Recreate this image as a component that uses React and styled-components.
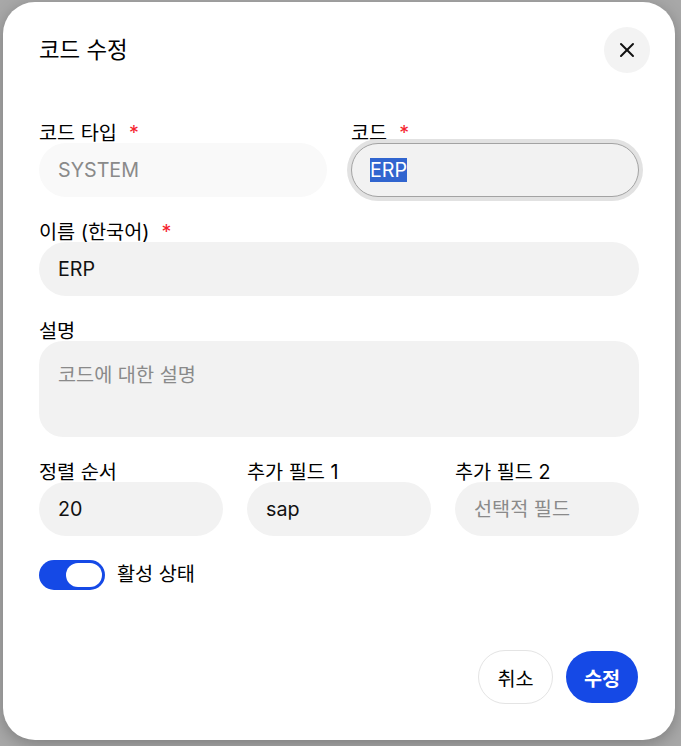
import React, { useEffect, useRef } from 'react';
import styled, { createGlobalStyle } from 'styled-components';

const GlobalStyle = createGlobalStyle`
  html, body {
    margin: 0;
    padding: 0;
    height: 100%;
    background: #a8a8a8;
  }
  * {
    box-sizing: border-box;
  }
`;

const FONT = `Inter, "Noto Sans CJK KR", sans-serif`;

const Backdrop = styled.div`
  width: 681px;
  height: 746px;
  padding: 2px 6px 6px 3px;
  overflow: hidden;
  font-family: ${FONT};
  color: #000;
`;

const Modal = styled.form`
  display: flex;
  flex-direction: column;
  width: 672px;
  height: 738px;
  padding: 25px 36px 36px;
  background: #fff;
  border-radius: 32px;
  box-shadow: 0 4px 16px rgba(0, 0, 0, 0.25);
`;

const Header = styled.header`
  display: flex;
  justify-content: space-between;
  align-items: center;
  height: 46px;
  margin-bottom: 50px;
  margin-right: -11px;
`;

const Title = styled.h2`
  margin: 0;
  font-size: 22.4px;
  font-weight: 400;
  line-height: 46px;
`;

const CloseButton = styled.button`
  display: flex;
  align-items: center;
  justify-content: center;
  width: 46px;
  height: 46px;
  padding: 0;
  border: none;
  border-radius: 50%;
  background: #f3f3f3;
  color: #111;
`;

const Fields = styled.div`
  display: flex;
  flex-direction: column;
  gap: 25px;
`;

const Row = styled.div`
  display: grid;
  grid-template-columns: repeat(${props => props.$cols || 1}, 1fr);
  gap: 24px;
`;

const Field = styled.div`
  display: flex;
  flex-direction: column;
  min-width: 0;
`;

const Label = styled.label`
  display: block;
  height: 20px;
  font-size: 19.7px;
  font-weight: 400;
  line-height: 20px;
  white-space: nowrap;
`;

const Required = styled.span`
  margin-left: 12px;
  color: #f5222d;
`;

const Input = styled.input`
  display: block;
  width: 100%;
  height: 54px;
  padding: 0 19px;
  border: none;
  border-radius: 27px;
  outline: none;
  background: #f2f2f2;
  font-family: ${FONT};
  font-size: 19.7px;
  color: #111;

  &::placeholder {
    color: #8a8a8a;
    opacity: 1;
  }
  &:disabled {
    background: #f9f9f9;
    color: #8a8a8a;
    -webkit-text-fill-color: #8a8a8a;
  }
  &:focus {
    border: 1px solid #a3a3a3;
    padding: 0 18px;
    box-shadow: 0 0 0 4px #e2e2e2;
  }
`;

const TextArea = styled.textarea`
  display: block;
  width: 100%;
  height: 96px;
  padding: 21px 19px;
  border: none;
  border-radius: 24px;
  outline: none;
  resize: none;
  background: #f2f2f2;
  font-family: ${FONT};
  font-size: 19.7px;
  line-height: 26px;

  &::placeholder {
    color: #8a8a8a;
    opacity: 1;
  }
`;

const ToggleRow = styled.div`
  display: flex;
  align-items: center;
  gap: 12px;
  margin-top: 24px;
  font-size: 19.7px;
  font-weight: 400;
  line-height: 26px;
`;

const ToggleLabel = styled.span`
  margin-top: -2px;
`;

const Toggle = styled.span`
  display: flex;
  justify-content: flex-end;
  width: 66px;
  height: 30px;
  padding: 3px;
  border-radius: 15px;
  background: #1549e6;
`;

const Knob = styled.span`
  width: 36px;
  height: 24px;
  border-radius: 12px;
  background: #fff;
`;

const Footer = styled.footer`
  display: flex;
  justify-content: flex-end;
  align-items: center;
  gap: 13px;
  margin-top: auto;
  padding-right: 1px;
`;

const Button = styled.button`
  height: ${props => (props.$primary ? '52px' : '54px')};
  width: ${props => (props.$primary ? '72px' : '75px')};
  padding: 0;
  border: ${props => (props.$primary ? 'none' : '1px solid #e4e4e4')};
  border-radius: 27px;
  background: ${props => (props.$primary ? '#1549e6' : '#fff')};
  color: ${props => (props.$primary ? '#fff' : '#000')};
  font-family: ${FONT};
  font-size: 19.7px;
  font-weight: ${props => (props.$primary ? 600 : 400)};
`;

function App() {
  const codeRef = useRef(null);

  useEffect(() => {
    codeRef.current.focus();
    codeRef.current.select();
  }, []);

  return (
    <Backdrop>
      <GlobalStyle />
      <Modal onSubmit={e => e.preventDefault()}>
        <Header>
          <Title>코드 수정</Title>
          <CloseButton type="button" aria-label="닫기">
            <svg width="24" height="24" viewBox="0 0 24 24" fill="none" stroke="currentColor" strokeWidth="2" strokeLinecap="round">
              <path d="M18 6 6 18" />
              <path d="m6 6 12 12" />
            </svg>
          </CloseButton>
        </Header>

        <Fields>
          <Row $cols={2}>
            <Field>
              <Label>코드 타입<Required>*</Required></Label>
              <Input defaultValue="SYSTEM" disabled />
            </Field>
            <Field>
              <Label>코드<Required>*</Required></Label>
              <Input ref={codeRef} defaultValue="ERP" />
            </Field>
          </Row>
          <Field>
            <Label>이름 (한국어)<Required>*</Required></Label>
            <Input defaultValue="ERP" />
          </Field>
          <Field>
            <Label>설명</Label>
            <TextArea placeholder="코드에 대한 설명" />
          </Field>
          <Row $cols={3}>
            <Field>
              <Label>정렬 순서</Label>
              <Input defaultValue="20" />
            </Field>
            <Field>
              <Label>추가 필드 1</Label>
              <Input defaultValue="sap" />
            </Field>
            <Field>
              <Label>추가 필드 2</Label>
              <Input placeholder="선택적 필드" />
            </Field>
          </Row>
        </Fields>

        <ToggleRow>
          <Toggle><Knob /></Toggle>
          <ToggleLabel>활성 상태</ToggleLabel>
        </ToggleRow>

        <Footer>
          <Button type="button">취소</Button>
          <Button type="submit" $primary>수정</Button>
        </Footer>
      </Modal>
    </Backdrop>
  );
}

export default App;
